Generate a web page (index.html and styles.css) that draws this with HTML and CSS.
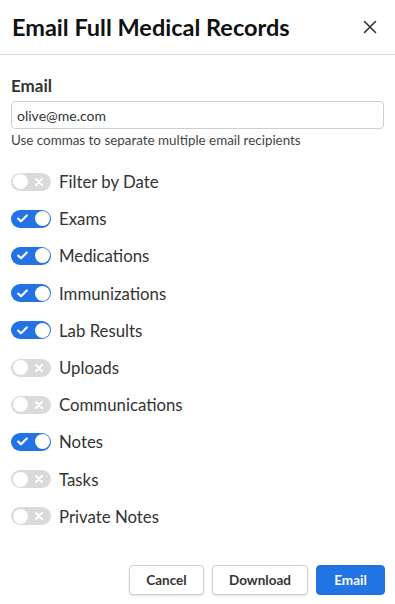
FILE: index.html
```html
<!DOCTYPE html>
<html>
<head>
<meta charset="utf-8">
<link rel="stylesheet" href="styles.css">
</head>
<body>
<div class="modal">
  <header class="header">
    <h1 class="title">Email Full Medical Records</h1>
    <button class="close" aria-label="Close">
      <svg width="14" height="14" viewBox="0 0 14 14"><path d="M1.5 1.5L12.5 12.5M12.5 1.5L1.5 12.5" stroke="#333" stroke-width="1.6" stroke-linecap="round"/></svg>
    </button>
  </header>
  <main class="content">
    <label class="field-label">Email</label>
    <input class="input" type="text" value="olive@me.com">
    <div class="help">Use commas to separate multiple email recipients</div>
    <ul class="toggles">
      <li class="row"><span class="toggle off"><span class="knob"></span><svg class="ic-x" width="8" height="8" viewBox="0 0 8 8"><path d="M1 1L7 7M7 1L1 7" stroke="#fff" stroke-width="2" stroke-linecap="round"/></svg></span><span class="label">Filter by Date</span></li>
      <li class="row"><span class="toggle on"><svg class="ic-check" width="11" height="9" viewBox="0 0 11 9"><path d="M1.2 4.6L4 7.3L9.8 1.5" stroke="#fff" stroke-width="2.2" fill="none" stroke-linecap="round" stroke-linejoin="round"/></svg><span class="knob"></span></span><span class="label">Exams</span></li>
      <li class="row"><span class="toggle on"><svg class="ic-check" width="11" height="9" viewBox="0 0 11 9"><path d="M1.2 4.6L4 7.3L9.8 1.5" stroke="#fff" stroke-width="2.2" fill="none" stroke-linecap="round" stroke-linejoin="round"/></svg><span class="knob"></span></span><span class="label">Medications</span></li>
      <li class="row"><span class="toggle on"><svg class="ic-check" width="11" height="9" viewBox="0 0 11 9"><path d="M1.2 4.6L4 7.3L9.8 1.5" stroke="#fff" stroke-width="2.2" fill="none" stroke-linecap="round" stroke-linejoin="round"/></svg><span class="knob"></span></span><span class="label">Immunizations</span></li>
      <li class="row"><span class="toggle on"><svg class="ic-check" width="11" height="9" viewBox="0 0 11 9"><path d="M1.2 4.6L4 7.3L9.8 1.5" stroke="#fff" stroke-width="2.2" fill="none" stroke-linecap="round" stroke-linejoin="round"/></svg><span class="knob"></span></span><span class="label">Lab Results</span></li>
      <li class="row"><span class="toggle off"><span class="knob"></span><svg class="ic-x" width="8" height="8" viewBox="0 0 8 8"><path d="M1 1L7 7M7 1L1 7" stroke="#fff" stroke-width="2" stroke-linecap="round"/></svg></span><span class="label">Uploads</span></li>
      <li class="row"><span class="toggle off"><span class="knob"></span><svg class="ic-x" width="8" height="8" viewBox="0 0 8 8"><path d="M1 1L7 7M7 1L1 7" stroke="#fff" stroke-width="2" stroke-linecap="round"/></svg></span><span class="label">Communications</span></li>
      <li class="row"><span class="toggle on"><svg class="ic-check" width="11" height="9" viewBox="0 0 11 9"><path d="M1.2 4.6L4 7.3L9.8 1.5" stroke="#fff" stroke-width="2.2" fill="none" stroke-linecap="round" stroke-linejoin="round"/></svg><span class="knob"></span></span><span class="label">Notes</span></li>
      <li class="row"><span class="toggle off"><span class="knob"></span><svg class="ic-x" width="8" height="8" viewBox="0 0 8 8"><path d="M1 1L7 7M7 1L1 7" stroke="#fff" stroke-width="2" stroke-linecap="round"/></svg></span><span class="label">Tasks</span></li>
      <li class="row"><span class="toggle off"><span class="knob"></span><svg class="ic-x" width="8" height="8" viewBox="0 0 8 8"><path d="M1 1L7 7M7 1L1 7" stroke="#fff" stroke-width="2" stroke-linecap="round"/></svg></span><span class="label">Private Notes</span></li>
    </ul>
  </main>
  <footer class="footer">
    <button class="btn">Cancel</button>
    <button class="btn">Download</button>
    <button class="btn primary">Email</button>
  </footer>
</div>
</body>
</html>
```

FILE: styles.css
```css
* { box-sizing: border-box; }
html, body { margin: 0; padding: 0; background: #fff; }
body {
  font-family: Lato, "Liberation Sans", sans-serif;
  color: #333;
  width: 395px;
  height: 604px;
  overflow: hidden;
}
.modal { display: flex; flex-direction: column; height: 604px; }
.header {
  height: 55px;
  display: flex;
  align-items: center;
  justify-content: space-between;
  padding: 0 18px 0 12px;
  border-bottom: 1px solid #dcdcdc;
}
.title {
  margin: 0;
  font-size: 23.5px;
  font-weight: 700;
  color: #111;
  padding-bottom: 1px;
}
.close {
  border: 0;
  background: none;
  padding: 0;
  width: 14px;
  height: 14px;
  display: flex;
}
.content { padding: 21px 11px 0 11px; flex: 1; }
.field-label {
  display: block;
  font-size: 17px;
  font-weight: 700;
  line-height: 20px;
  color: #333;
}
.input {
  display: block;
  margin-top: 5px;
  width: 373px;
  height: 28px;
  border: 1px solid #cfcfcf;
  border-radius: 4px;
  padding: 0 5px;
  font-family: inherit;
  font-size: 14px;
  color: #333;
  outline: none;
}
.help {
  margin-top: 2px;
  font-size: 13.4px;
  line-height: 18px;
  color: #444;
}
.toggles { list-style: none; margin: 14px 0 0 0; padding: 0; }
.row {
  height: 37.2px;
  display: flex;
  align-items: center;
  gap: 8px;
}
.toggle {
  position: relative;
  width: 40px;
  height: 18px;
  border-radius: 9px;
  display: flex;
  align-items: center;
  flex: none;
}
.toggle.off { background: #dadada; padding-left: 1.5px; }
.toggle.on { background: #2273e3; padding-right: 1.5px; justify-content: flex-end; }
.knob {
  width: 15px;
  height: 15px;
  border-radius: 50%;
  background: #fff;
}
.ic-x { position: absolute; left: 24px; top: 5px; }
.ic-check { position: absolute; left: 6px; top: 4.5px; }
.label { font-size: 16.8px; color: #333; }
.footer {
  display: flex;
  justify-content: flex-end;
  gap: 8px;
  padding: 0 10px 9px 0;
}
.btn {
  height: 30px;
  padding: 0 16px;
  border: 1px solid #cfcfcf;
  border-radius: 4px;
  background: #fff;
  font-family: inherit;
  font-size: 13.5px;
  font-weight: 700;
  color: #333;
  box-shadow: 0 1px 2px rgba(0,0,0,0.12);
}
.btn:nth-child(1) { width: 75px; }
.btn:nth-child(2) { width: 96px; }
.btn.primary {
  width: 69px;
  background: #2273e3;
  border-color: #2273e3;
  color: #fff;
  box-shadow: none;
}
```
